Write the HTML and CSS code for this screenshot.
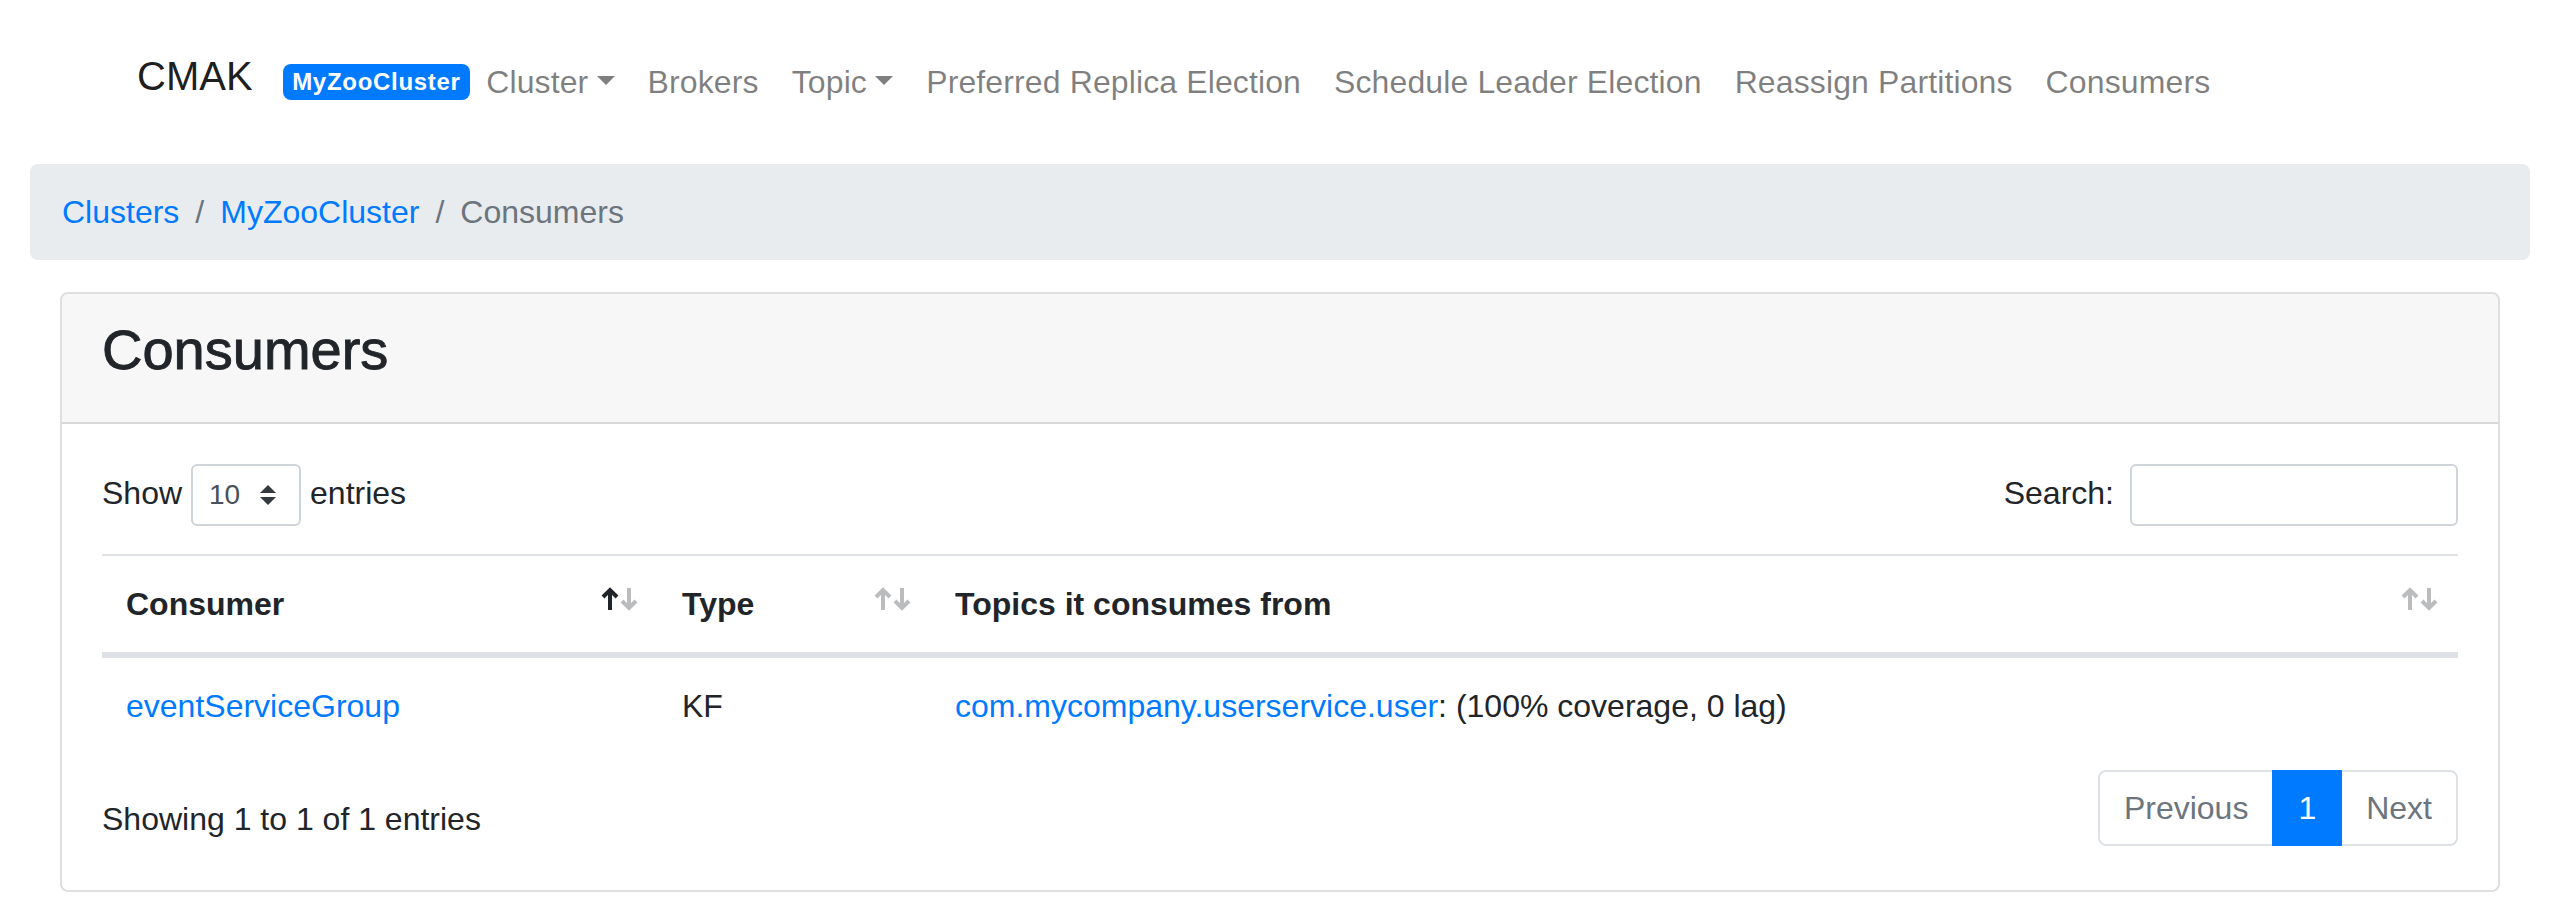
FILE: index.html
```html
<!DOCTYPE html>
<html lang="en">
<head>
<meta charset="utf-8">
<title>Consumers</title>
<link rel="stylesheet" href="styles.css">
</head>
<body>
<nav class="navbar">
  <a class="navbar-brand" href="#">CMAK</a>
  <span class="badge">MyZooCluster</span>
  <ul class="nav">
    <li><a class="nav-link dropdown-toggle" href="#">Cluster</a></li>
    <li><a class="nav-link" href="#">Brokers</a></li>
    <li><a class="nav-link dropdown-toggle" href="#">Topic</a></li>
    <li><a class="nav-link" href="#">Preferred Replica Election</a></li>
    <li><a class="nav-link" href="#">Schedule Leader Election</a></li>
    <li><a class="nav-link" href="#">Reassign Partitions</a></li>
    <li><a class="nav-link" href="#">Consumers</a></li>
  </ul>
</nav>
<main class="page">
  <ol class="breadcrumb">
    <li class="crumb"><a href="#">Clusters</a></li>
    <li class="crumb"><a href="#">MyZooCluster</a></li>
    <li class="crumb active">Consumers</li>
  </ol>
  <section class="card">
    <div class="card-header"><h3>Consumers</h3></div>
    <div class="card-body">
      <div class="dt-top">
        <label class="dt-length">Show
          <span class="select"><span>10</span><svg class="select-arrows" width="16" height="20" viewBox="0 0 4 5"><path d="M2 0L0 2h4zm0 5L0 3h4z" fill="#343a40"/></svg></span>
          entries</label>
        <label class="dt-filter">Search:<input class="search-input" type="search"></label>
      </div>
      <table class="dt">
        <thead>
          <tr>
            <th class="c1">Consumer<svg class="sort up on" viewBox="0 0 18 24"><path d="M9 23V3M2 10l7-7 7 7"/></svg><svg class="sort down" viewBox="0 0 18 24"><path d="M9 1v20M2 14l7 7 7-7"/></svg></th>
            <th class="c2">Type<svg class="sort up" viewBox="0 0 18 24"><path d="M9 23V3M2 10l7-7 7 7"/></svg><svg class="sort down" viewBox="0 0 18 24"><path d="M9 1v20M2 14l7 7 7-7"/></svg></th>
            <th class="c3">Topics it consumes from<svg class="sort up" viewBox="0 0 18 24"><path d="M9 23V3M2 10l7-7 7 7"/></svg><svg class="sort down" viewBox="0 0 18 24"><path d="M9 1v20M2 14l7 7 7-7"/></svg></th>
          </tr>
        </thead>
        <tbody>
          <tr>
            <td><a href="#">eventServiceGroup</a></td>
            <td>KF</td>
            <td><a href="#">com.mycompany.userservice.user</a>: (100% coverage, 0 lag)</td>
          </tr>
        </tbody>
      </table>
      <div class="dt-bottom">
        <div class="dt-info">Showing 1 to 1 of 1 entries</div>
        <ul class="pagination">
          <li class="page-item disabled"><a class="page-link" href="#">Previous</a></li>
          <li class="page-item active"><a class="page-link" href="#">1</a></li>
          <li class="page-item disabled"><a class="page-link" href="#">Next</a></li>
        </ul>
      </div>
    </div>
  </section>
</main>
</body>
</html>
```
FILE: styles.css
```css
* { box-sizing: border-box; }

body {
  margin: 0;
  font-family: "Liberation Sans", Arial, sans-serif;
  font-size: 32px;
  line-height: 1.5;
  color: #212529;
  background: #fff;
}

a { color: #007bff; text-decoration: none; }

/* Navbar */
.navbar {
  display: flex;
  align-items: center;
  padding: 42px 0 42px 137px;
}
.navbar-brand {
  font-size: 40px;
  line-height: 60px;
  padding: 4px 0 16px;
  margin-right: 30px;
  color: rgba(0, 0, 0, 0.9);
}
.badge {
  display: inline-block;
  background: #007bff;
  color: #fff;
  font-size: 24px;
  font-weight: 700;
  line-height: 24px;
  padding: 6px 9.6px;
  border-radius: 8px;
  letter-spacing: 0.7px;
}
.nav {
  display: flex;
  list-style: none;
  margin: 0;
  padding: 0;
}
.nav-link {
  display: block;
  padding: 16px 17px 16px 16px;
  color: rgba(0, 0, 0, 0.5);
  line-height: 48px;
  letter-spacing: 0.12px;
}
.dropdown-toggle::after {
  content: "";
  display: inline-block;
  margin-left: 8.2px;
  vertical-align: 8.2px;
  border-top: 9.6px solid;
  border-right: 9.6px solid transparent;
  border-left: 9.6px solid transparent;
  border-bottom: 0;
}

/* Page */
.page { padding: 0 30px; }

.breadcrumb {
  display: flex;
  list-style: none;
  margin: 0 0 32px;
  padding: 24px 32px;
  background: #e9ecef;
  border-radius: 8px;
}
.crumb + .crumb { padding-left: 16px; }
.crumb + .crumb::before {
  content: "/";
  padding-right: 16px;
  color: #6c757d;
}
.crumb.active { color: #6c757d; }

/* Card */
.card {
  margin: 0 30px;
  border: 2px solid rgba(0, 0, 0, 0.125);
  border-radius: 8px;
  background: #fff;
  overflow: hidden;
}
.card-header {
  padding: 24px 40px;
  background: rgba(0, 0, 0, 0.03);
  border-bottom: 2px solid rgba(0, 0, 0, 0.125);
}
.card-header h3 {
  margin: 0 0 16px;
  font-size: 56px;
  font-weight: 500;
  line-height: 64px;
  -webkit-text-stroke: 0.9px #212529;
}
.card-body { padding: 40px; }

/* DataTables controls */
.dt-top {
  display: flex;
  justify-content: space-between;
  align-items: flex-start;
}
.dt-length, .dt-filter {
  display: flex;
  align-items: baseline;
  margin-bottom: 16px;
}
.dt-length { gap: 9px; }
.select {
  display: inline-flex;
  align-items: center;
  justify-content: space-between;
  width: 110px;
  height: 62px;
  padding: 8px 23px 8px 16px;
  border: 2px solid #ced4da;
  border-radius: 6px;
  font-size: 28px;
  line-height: 42px;
  color: #495057;
  background: #fff;
}
.select-arrows { display: block; }
.search-input {
  margin-left: 16px;
  width: 328px;
  height: 62px;
  padding: 8px 16px;
  border: 2px solid #ced4da;
  border-radius: 6px;
  font-family: inherit;
  font-size: 28px;
  line-height: 42px;
  color: #495057;
  background: #fff;
}

/* Table */
.dt {
  width: 100%;
  table-layout: fixed;
  border-collapse: separate;
  border-spacing: 0;
  margin: 12px 0;
}
.dt th, .dt td {
  box-sizing: content-box;
  padding: 24px;
  border-top: 2px solid #dee2e6;
  text-align: left;
  vertical-align: top;
}
.dt thead th {
  position: relative;
  padding-right: 60px;
  vertical-align: bottom;
  border-bottom: 4px solid #dee2e6;
  font-weight: 700;
}
.dt .c1 { width: 472px; }
.dt .c2 { width: 189px; }

.sort {
  position: absolute;
  top: 31px;
  width: 18px;
  height: 24px;
  fill: none;
  stroke: #212529;
  stroke-width: 4;
  opacity: 0.3;
}
.sort.up { right: 39px; }
.sort.down { right: 20px; }
.sort.on { opacity: 1; }

/* Bottom */
.dt-bottom {
  display: flex;
  justify-content: space-between;
  align-items: flex-start;
}
.dt-info { padding-top: 29px; white-space: nowrap; }
.pagination {
  display: flex;
  list-style: none;
  margin: 4px 0;
  padding: 0;
}
.page-link {
  display: block;
  padding: 16px 24px;
  line-height: 40px;
  border: 2px solid #dee2e6;
  margin-left: -2px;
  color: #6c757d;
  background: #fff;
}
.page-item:first-child .page-link {
  margin-left: 0;
  border-radius: 8px 0 0 8px;
}
.page-item:last-child .page-link { border-radius: 0 8px 8px 0; }
.page-item.active .page-link {
  position: relative;
  z-index: 1;
  background: #007bff;
  border-color: #007bff;
  color: #fff;
}
```
